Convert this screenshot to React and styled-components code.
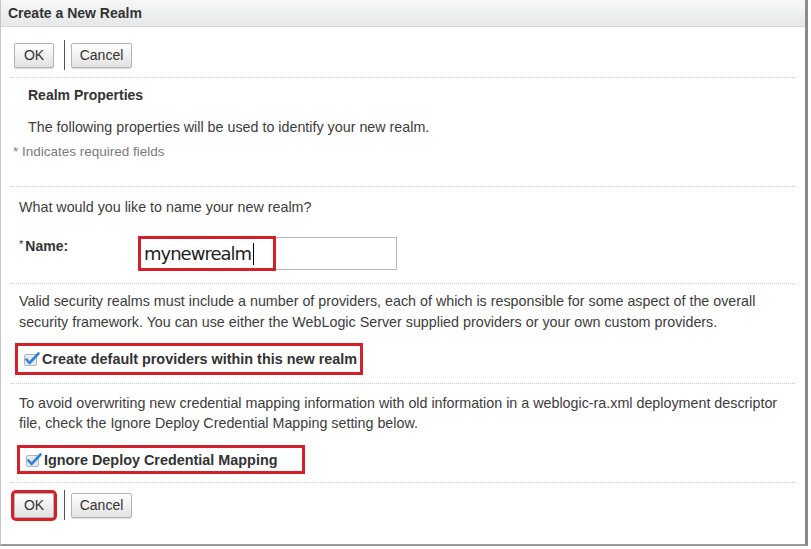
import React from 'react';
import styled, { createGlobalStyle } from 'styled-components';

const GlobalStyle = createGlobalStyle`
  html, body {
    margin: 0;
    padding: 0;
    background: #ffffff;
  }
  body {
    font-family: "Liberation Sans", Arial, sans-serif;
    color: #333;
  }
`;

const Panel = styled.div`
  width: 808px;
  height: 546px;
  box-sizing: border-box;
  border-left: 1px solid #c4c4c4;
  border-right: 3px solid #8a8a8a;
  border-bottom: 2px solid #9a9a9a;
  background: #fff;
  display: flex;
  flex-direction: column;
`;

const Header = styled.div`
  height: 27px;
  box-sizing: border-box;
  padding: 0 7px;
  display: flex;
  align-items: center;
  background: linear-gradient(#f7f7f7, #e6e8e8);
  border-bottom: 1px solid #d6d6d6;
  font-weight: bold;
  font-size: 14px;
  color: #333;
`;

const Body = styled.div`
  padding: 0 10px;
`;

const Toolbar = styled.div`
  display: flex;
  align-items: center;
  height: 30px;
  margin-top: ${(p) => p.$top}px;
  margin-bottom: ${(p) => p.$bottom}px;
  padding-left: 3px;
`;

const Button = styled.button`
  height: 25px;
  width: ${(p) => p.$w}px;
  padding: 0;
  font-family: "Liberation Sans", Arial, sans-serif;
  font-size: 14px;
  color: #333;
  border: 1px solid #b4b4b4;
  border-radius: 2px;
  background: linear-gradient(#ffffff, #e2e2e2);
  box-shadow: 0 1px 1px rgba(0, 0, 0, 0.15);
  outline: ${(p) => (p.$marked ? '3px solid #d4202a' : 'none')};
  outline-offset: 0;
`;

const ToolSep = styled.div`
  width: 1px;
  height: 30px;
  background: #555;
  margin: 0 6px 0 10px;
`;

const Divider = styled.div`
  border-top: 1px dotted #c8c8c8;
`;

const Title = styled.div`
  font-weight: bold;
  font-size: 14px;
  line-height: 18px;
  padding-left: 17px;
  margin-top: 8px;
`;

const Text = styled.div`
  font-size: 14.3px;
  line-height: ${(p) => p.$lh || 18}px;
  padding-left: ${(p) => p.$left || 8}px;
  margin-top: ${(p) => p.$top || 0}px;
  margin-bottom: ${(p) => p.$bottom || 0}px;
  color: #3c3c3c;
`;

const Note = styled.div`
  font-size: 13.5px;
  line-height: 18px;
  padding-left: 2px;
  margin-top: 7px;
  margin-bottom: 25px;
  color: #7a7a7a;
`;

const NameRow = styled.div`
  display: flex;
  align-items: flex-start;
  margin-top: 21px;
  margin-bottom: 13px;
  padding-left: 8px;
`;

const Label = styled.div`
  width: 119px;
  font-weight: bold;
  font-size: 14px;
  line-height: 14px;
  color: #333;
`;

const Star = styled.span`
  font-weight: normal;
  font-size: 11px;
  vertical-align: 3px;
  margin-right: 2px;
`;

const InputWrap = styled.div`
  position: relative;
  width: 259px;
  height: 33px;
  box-sizing: border-box;
  border: 1px solid #b8b8b8;
  display: flex;
  align-items: center;
  padding-left: 5px;
  font-family: "DejaVu Sans", sans-serif;
  font-size: 18px;
  letter-spacing: -1px;
  color: #222;
`;

const Caret = styled.span`
  display: inline-block;
  width: 1px;
  height: 22px;
  background: #000;
  margin-left: 2px;
`;

const Highlight = styled.div`
  position: absolute;
  left: -1px;
  top: -2px;
  width: 138px;
  height: 35px;
  box-sizing: border-box;
  border: 3px solid #d4202a;
  pointer-events: none;
`;

const CheckRow = styled.div`
  display: flex;
  align-items: center;
  gap: 2px;
  width: ${(p) => p.$w}px;
  height: ${(p) => p.$h}px;
  box-sizing: border-box;
  border: 3px solid #d4202a;
  margin-left: ${(p) => p.$left}px;
  margin-top: ${(p) => p.$top}px;
  margin-bottom: ${(p) => p.$bottom}px;
  padding-left: 5px;
  font-weight: bold;
  font-size: 14.4px;
  color: #333;
  white-space: nowrap;
`;

const Check = () => (
  <svg width="17" height="16" viewBox="0 0 17 16">
    <rect x="1.5" y="3.5" width="12" height="11" rx="1.5" fill="#e8eaee" stroke="#b0b4ba" />
    <path d="M3.5 8.5 L6.5 12 L15.5 2.5" fill="none" stroke="#3384d4" strokeWidth="2.6" strokeLinecap="round" strokeLinejoin="round" />
  </svg>
);

export default function App() {
  return (
    <>
      <GlobalStyle />
      <Panel>
        <Header>Create a New Realm</Header>
        <Body>
          <Toolbar $top={13} $bottom={7}>
            <Button $w={40}>OK</Button>
            <ToolSep />
            <Button $w={61}>Cancel</Button>
          </Toolbar>
          <Divider />
          <Title>Realm Properties</Title>
          <Text $left={17} $top={14}>The following properties will be used to identify your new realm.</Text>
          <Note>* Indicates required fields</Note>
          <Divider />
          <Text $top={11}>What would you like to name your new realm?</Text>
          <NameRow>
            <Label><Star>*</Star>Name:</Label>
            <InputWrap>
              mynewrealm<Caret />
              <Highlight />
            </InputWrap>
          </NameRow>
          <Divider />
          <Text $lh={21} $top={7}>
            Valid security realms must include a number of providers, each of which is responsible for some aspect of the overall
            <br />
            security framework. You can use either the WebLogic Server supplied providers or your own custom providers.
          </Text>
          <CheckRow $w={348} $h={32} $left={4} $top={10} $bottom={8}>
            <Check />
            Create default providers within this new realm
          </CheckRow>
          <Divider />
          <Text $lh={20} $top={9}>
            To avoid overwriting new credential mapping information with old information in a weblogic-ra.xml deployment descriptor
            <br />
            file, check the Ignore Deploy Credential Mapping setting below.
          </Text>
          <CheckRow $w={288} $h={29} $left={6} $top={12} $bottom={8}>
            <Check />
            Ignore Deploy Credential Mapping
          </CheckRow>
          <Divider />
          <Toolbar $top={7} $bottom={0}>
            <Button $w={40} $marked>OK</Button>
            <ToolSep />
            <Button $w={61}>Cancel</Button>
          </Toolbar>
        </Body>
      </Panel>
    </>
  );
}
